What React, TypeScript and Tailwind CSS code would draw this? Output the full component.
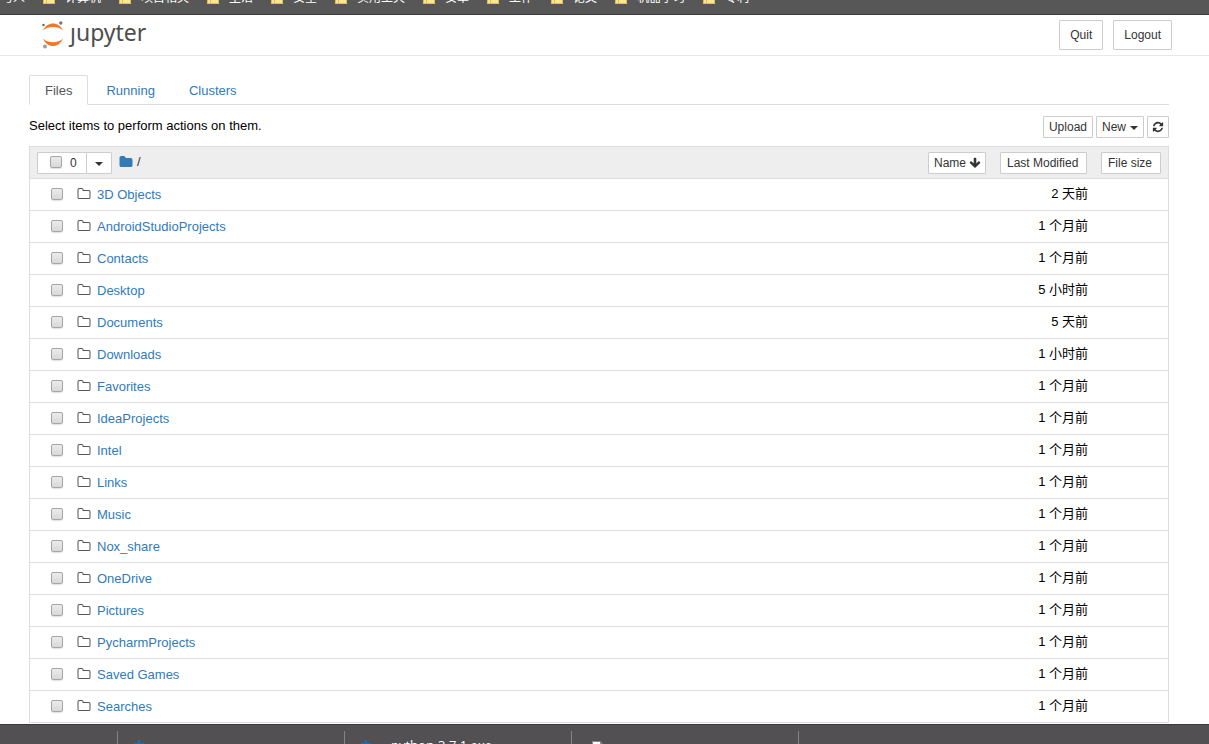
import { useState } from "react";
import clsx from "clsx";

const bookmarks = [
  "计算机",
  "项目相关",
  "生活",
  "安全",
  "实用工具",
  "安卓",
  "工作",
  "论文",
  "机器学习",
  "专利",
];

const tabs = ["Files", "Running", "Clusters"];

const items = [
  { name: "3D Objects", modified: "2 天前" },
  { name: "AndroidStudioProjects", modified: "1 个月前" },
  { name: "Contacts", modified: "1 个月前" },
  { name: "Desktop", modified: "5 小时前" },
  { name: "Documents", modified: "5 天前" },
  { name: "Downloads", modified: "1 小时前" },
  { name: "Favorites", modified: "1 个月前" },
  { name: "IdeaProjects", modified: "1 个月前" },
  { name: "Intel", modified: "1 个月前" },
  { name: "Links", modified: "1 个月前" },
  { name: "Music", modified: "1 个月前" },
  { name: "Nox_share", modified: "1 个月前" },
  { name: "OneDrive", modified: "1 个月前" },
  { name: "Pictures", modified: "1 个月前" },
  { name: "PycharmProjects", modified: "1 个月前" },
  { name: "Saved Games", modified: "1 个月前" },
  { name: "Searches", modified: "1 个月前" },
];

const checkboxClass =
  "block h-3 w-3 shrink-0 appearance-none rounded-[2px] border border-[#a6a6a6] bg-gradient-to-b from-[#ececec] to-[#d8d8d8] shadow-[0_1px_1px_rgba(0,0,0,0.12)] checked:from-[#337ab7] checked:to-[#337ab7]";

const xsButton =
  "flex h-[22px] items-center rounded-[1px] border border-[#ccc] bg-white text-xs text-[#333]";

const iconPaths = {
  folder:
    "M1728 608v704q0 92-66 158t-158 66h-1216q-92 0-158-66t-66-158v-960q0-92 66-158t158-66h320q92 0 158 66t66 158v32h672q92 0 158 66t66 158z",
  folderOpen:
    "M1600 1312v-704q0-40-28-68t-68-28h-704q-40 0-68-28t-28-68v-64q0-40-28-68t-68-28h-320q-40 0-68 28t-28 68v960q0 40 28 68t68 28h1216q40 0 68-28t28-68zm128-704v704q0 92-66 158t-158 66h-1216q-92 0-158-66t-66-158v-960q0-92 66-158t158-66h320q92 0 158 66t66 158v32h672q92 0 158 66t66 158z",
  arrowDown:
    "M1675 832q0 53-37 90l-651 652q-39 37-91 37-53 0-90-37l-651-652q-38-36-38-90 0-53 38-91l74-75q39-37 91-37 53 0 90 37l294 294v-704q0-52 38-90t90-38h128q52 0 90 38t38 90v704l294-294q37-37 90-37 52 0 91 37l75 75q37 39 37 91z",
  refresh:
    "M1639 1056q0 5-1 7-64 268-268 434.5t-478 166.5q-146 0-282.5-55t-243.5-157l-129 129q-19 19-45 19t-45-19-19-45v-448q0-26 19-45t45-19h448q26 0 45 19t19 45-19 45l-137 137q71 66 161 102t187 36q134 0 250-65t186-179q11-17 53-117 8-23 30-23h192q13 0 22.5 9.500t9.500 22.500zm25-800v448q0 26-19 45t-45 19h-448q-26 0-45-19t-19-45 19-45l138-138q-148-137-349-137-134 0-250 65t-186 179q-11 17-53 117-8 23-30 23h-199q-13 0-22.500-9.500t-9.500-22.500v-7q65-268 270-434.500t480-166.500q146 0 284 55.500t245 156.500l130-129q19-19 45-19t45 19 19 45z",
};

function Icon({ name, className }: { name: keyof typeof iconPaths; className?: string }) {
  return (
    <svg viewBox="0 0 1792 1792" fill="currentColor" className={clsx("shrink-0", className)} aria-hidden="true">
      <path d={iconPaths[name]} />
    </svg>
  );
}

function Caret() {
  return (
    <svg viewBox="0 0 8 4" className="mt-[2px] h-1 w-2 shrink-0" fill="currentColor" aria-hidden="true">
      <path d="M0 0h8L4 4z" />
    </svg>
  );
}

function BookmarkBar() {
  return (
    <nav className="flex h-[15px] items-end gap-[18px] overflow-hidden border-b border-[#3b393b] bg-[#575757] pb-2 text-xs leading-4 text-white">
      <a href="#" className="flex w-[25px] shrink-0 justify-end whitespace-nowrap">与人</a>
      {bookmarks.map((label) => (
        <a key={label} href="#" className="flex shrink-0 items-end gap-[10px]">
          <svg viewBox="0 0 12 12" className="mb-[2px] h-3 w-3" aria-hidden="true">
            <path d="M0 0h5l1 2h6v10H0z" fill="#e3bf45" />
            <path d="M1 3h2v8H1zM4 3h7v8H4z" fill="#fbe78f" />
          </svg>
          <span className="whitespace-nowrap">{label}</span>
        </a>
      ))}
    </nav>
  );
}

function Logo() {
  return (
    <a href="#" aria-label="jupyter" className="flex items-center gap-[6px] text-[#4e4e4e]">
      <svg viewBox="0 0 22 28" className="h-7 w-[22px]" aria-hidden="true">
        <path d="M1 9.500C3 5 7 2.500 11 2.500s8 2.500 10 7C18.500 7 15 6 11 6S3.500 7 1 9.500z" fill="#f37726" />
        <path d="M1 17.500C3 22.500 7 25 11 25s8-2.500 10-7.500c-2.500 2.500-6 3.700-10 3.700S3.500 20 1 17.500z" fill="#f37726" />
        <circle cx="18.800" cy="2" r="1.700" fill="#767677" />
        <circle cx="1.500" cy="4" r="1.200" fill="#616262" />
        <circle cx="3" cy="25.500" r="2" fill="#9e9e9e" />
      </svg>
      <span className="pb-[6px] font-['Noto_Sans','Open_Sans',sans-serif] text-[23px] leading-7">ȷupyter</span>
    </a>
  );
}

function Header() {
  return (
    <header className="flex h-[41px] items-center justify-between border-b border-[#e7e7e7] pr-[37px] pl-[42px]">
      <Logo />
      <div className="flex gap-[10px] text-xs text-[#333]">
        <button className="h-[30px] rounded-[1px] border border-[#ccc] bg-white px-[10px]">Quit</button>
        <button className="h-[30px] rounded-[1px] border border-[#ccc] bg-white px-[10px]">Logout</button>
      </div>
    </header>
  );
}

function FileList() {
  const [selected, setSelected] = useState<string[]>([]);

  const toggle = (name: string) =>
    setSelected((prev) => (prev.includes(name) ? prev.filter((n) => n !== name) : [...prev, name]));

  return (
    <table className="mt-2 w-full table-fixed border-separate border-spacing-0 border border-b-0 border-[#ddd]">
      <thead className="bg-[#eee]">
        <tr className="h-8">
          <th className="border-b border-[#ddd] p-0 font-normal">
            <div className="flex items-center justify-between pr-[14px] pl-[7px]">
              <div className="flex items-center">
                <label className={clsx(xsButton, "w-[50px] gap-2 pl-3")}>
                  <input
                    type="checkbox"
                    className={clsx(checkboxClass, "mb-[2px]")}
                    checked={selected.length === items.length}
                    onChange={(e) => setSelected(e.target.checked ? items.map((i) => i.name) : [])}
                  />
                  {selected.length}
                </label>
                <button aria-label="Select by type" className={clsx(xsButton, "-ml-px w-[26px] justify-center")}>
                  <Caret />
                </button>
                <div className="flex items-center pb-[2px] pl-[7px] text-[13px] text-[#333]">
                  <a href="#" aria-label="Home" className="text-[#337ab7]">
                    <Icon name="folder" className="h-[14px] w-[14px]" />
                  </a>
                  <span className="ml-1">/</span>
                </div>
              </div>
              <button className={clsx(xsButton, "w-[58px] gap-[3px] pl-[5px]")}>
                Name
                <Icon name="arrowDown" className="h-3 w-3" />
              </button>
            </div>
          </th>
          <th className="w-[88px] border-b border-[#ddd] p-0 font-normal">
            <button className={clsx(xsButton, "w-[87px] pl-[6px]")}>Last Modified</button>
          </th>
          <th className="w-[80px] border-b border-[#ddd] p-0 font-normal">
            <button className={clsx(xsButton, "ml-[13px] w-[60px] pl-[6px]")}>File size</button>
          </th>
        </tr>
      </thead>
      <tbody>
        {items.map(({ name, modified }) => (
          <tr key={name} className="h-8">
            <td className="border-b border-[#ddd] p-0">
              <div className="flex items-center pl-[21px]">
                <input
                  type="checkbox"
                  aria-label={name}
                  className={clsx(checkboxClass, "mb-[2px]")}
                  checked={selected.includes(name)}
                  onChange={() => toggle(name)}
                />
                <Icon name="folderOpen" className="mb-[2px] ml-[14px] h-[14px] w-[14px] text-[#555]" />
                <a href="#" className="ml-[6px] text-[#337ab7]">{name}</a>
              </div>
            </td>
            <td className="border-b border-[#ddd] p-0 pb-[2px] text-right whitespace-nowrap">{modified}</td>
            <td className="border-b border-[#ddd] p-0" />
          </tr>
        ))}
      </tbody>
    </table>
  );
}

function DownloadMark() {
  return (
    <svg viewBox="0 0 10 12" className="h-3 w-[10px]" aria-hidden="true">
      <path d="M4 2h2v3h4v2H0V5h4z" fill="#1c6fb5" />
    </svg>
  );
}

function DownloadBar() {
  return (
    <footer className="grid h-5 grid-cols-[117px_227px_227px_227px_1fr] overflow-hidden border-t border-[#3b393b] bg-[#525052] pt-[6px] text-xs leading-4 text-white">
      <div />
      <div className="border-l border-[#858385] pt-[7px] pl-4">
        <DownloadMark />
      </div>
      <div className="flex items-start border-l border-[#858385] pl-4">
        <span className="pt-[7px]">
          <DownloadMark />
        </span>
        <span className="pt-[6px] pl-5 font-['Open_Sans',sans-serif] text-[13px]">python-3.7.1.exe</span>
      </div>
      <div className="border-l border-[#858385] pt-[10px] pl-5">
        <svg viewBox="0 0 11 14" className="h-[14px] w-[11px]" aria-hidden="true">
          <path d="M0 0h8l3 3v11H0z" fill="#8a888a" />
          <path d="M1 1h7v12H1z" fill="#fff" />
        </svg>
      </div>
      <div className="border-l border-[#858385]" />
    </footer>
  );
}

export default function App() {
  const [tab, setTab] = useState("Files");

  return (
    <div className="flex min-h-screen flex-col bg-white font-['Liberation_Sans','Noto_Sans_CJK_SC',sans-serif] text-[13px] leading-5 text-black">
      <BookmarkBar />
      <Header />
      <main className="grow pt-[19px] pr-10 pl-[29px]">
        <div role="tablist" className="flex gap-[2px] border-b border-[#ddd]">
          {tabs.map((label) => (
            <button
              key={label}
              role="tab"
              aria-selected={tab === label}
              onClick={() => setTab(label)}
              className={clsx(
                "-mb-px h-[30px] rounded-t-[2px] border px-[15px] pt-[2px]",
                tab === label ? "border-[#ddd] border-b-white bg-white text-[#555]" : "border-transparent text-[#337ab7]",
              )}
            >
              {label}
            </button>
          ))}
        </div>

        <div className="mt-[11px] flex items-start justify-between">
          <p>Select items to perform actions on them.</p>
          <div className="flex gap-[3px]">
            <button className={clsx(xsButton, "px-[5px]")}>Upload</button>
            <button className={clsx(xsButton, "gap-1 px-[5px]")}>
              New
              <Caret />
            </button>
            <button aria-label="Refresh" className={clsx(xsButton, "px-[4px]")}>
              <Icon name="refresh" className="h-3 w-3" />
            </button>
          </div>
        </div>

        <FileList />
      </main>
      <DownloadBar />
    </div>
  );
}
